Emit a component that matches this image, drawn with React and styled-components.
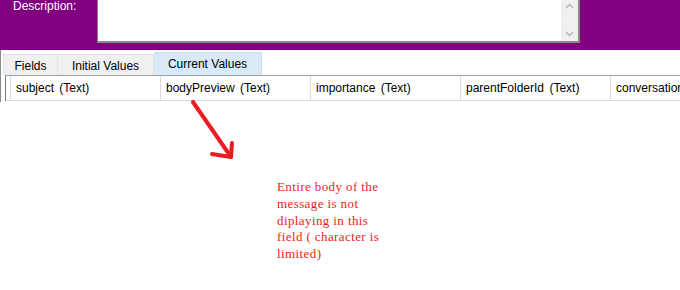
import React from "react";
import styled, { createGlobalStyle } from "styled-components";

const Global = createGlobalStyle`
  html, body { margin: 0; padding: 0; background: #ffffff; }
  body { width: 680px; height: 290px; overflow: hidden; font-family: "Liberation Sans", Arial, sans-serif; }
`;

const Page = styled.div`
  position: relative;
  width: 680px;
  height: 290px;
  background: #ffffff;
  overflow: hidden;
`;

const Header = styled.div`
  height: 50px;
  background: #800080;
  display: flex;
  align-items: flex-start;
  padding-left: 13px;
  box-sizing: border-box;
`;

const Label = styled.div`
  color: #ffffff;
  font-size: 12px;
  width: 84px;
  margin-top: -2px;
  line-height: 16px;
`;

const TextBox = styled.div`
  width: 483px;
  height: 43px;
  background: #ffffff;
  border-left: 1px solid #8a8a8a;
  border-right: 2px solid #8a8a8a;
  border-bottom: 2px solid #8a8a8a;
  box-sizing: border-box;
  display: flex;
  justify-content: flex-end;
`;

const ScrollBar = styled.div`
  width: 17px;
  background: #f0f0f0;
  display: flex;
  flex-direction: column;
  justify-content: space-between;
  align-items: center;
  padding: 3px 0 4px;
  box-sizing: border-box;
`;

const Panel = styled.div`
  border-left: 1px solid #8c8c8c;
  height: 52px;
  box-sizing: border-box;
  padding-top: 2px;
`;

const Tabs = styled.div`
  display: flex;
  align-items: flex-end;
  height: 23px;
  padding-left: 2px;
`;

const Tab = styled.div`
  height: ${(p) => (p.$active ? "23px" : "21px")};
  width: ${(p) => p.$w}px;
  box-sizing: border-box;
  background: ${(p) => (p.$active ? "#d9e9f8" : "#f0f0f0")};
  border: 1px solid ${(p) => (p.$active ? "#c6dcf0" : "#e3e3e3")};
  border-bottom: none;
  border-left: ${(p) => (p.$first ? "1px solid #e3e3e3" : "none")};
  font-size: 12px;
  color: #000;
  display: flex;
  align-items: center;
  justify-content: center;
  padding-top: ${(p) => (p.$active ? "0" : "2px")};
`;

const Grid = styled.div`
  margin-left: 4px;
  border-top: 1px solid #a0a0a0;
  border-left: 1px solid #7a7a7a;
  display: flex;
  height: 26px;
  box-sizing: border-box;
  overflow: hidden;
`;

const RowHeader = styled.div`
  flex: 0 0 4px;
  border-right: 1px solid #dadada;
  border-bottom: 1px solid #dadada;
`;

const Cell = styled.div`
  flex: 0 0 150px;
  box-sizing: border-box;
  border-right: 1px solid #dadada;
  border-bottom: 1px solid #dadada;
  font-size: 12px;
  color: #000;
  padding-left: 5px;
  display: flex;
  align-items: center;
  white-space: nowrap;
  overflow: hidden;
  word-spacing: 2px;
`;

const Arrow = styled.svg`
  position: absolute;
  left: 185px;
  top: 95px;
`;

const Note = styled.div`
  position: absolute;
  left: 277px;
  top: 179px;
  width: 108px;
  color: #ed1c24;
  font-family: "Liberation Serif", "Times New Roman", serif;
  font-size: 13px;
  letter-spacing: 0.4px;
  line-height: 16.8px;
`;

const Chevron = ({ up }) => (
  <svg width="9" height="6" viewBox="0 0 9 6">
    <path
      d={up ? "M1 5 L4.5 1.5 L8 5" : "M1 1 L4.5 4.5 L8 1"}
      fill="none"
      stroke="#b4b4b4"
      strokeWidth="1.4"
    />
  </svg>
);

const columns = [
  "subject  (Text)",
  "bodyPreview  (Text)",
  "importance  (Text)",
  "parentFolderId  (Text)",
  "conversationId  (Text)",
];

export default function App() {
  return (
    <Page>
      <Global />
      <Header>
        <Label>Description:</Label>
        <TextBox>
          <ScrollBar>
            <Chevron up />
            <Chevron />
          </ScrollBar>
        </TextBox>
      </Header>
      <Panel>
        <Tabs>
          <Tab $w={55} $first>Fields</Tab>
          <Tab $w={96}>Initial Values</Tab>
          <Tab $w={108} $active>Current Values</Tab>
        </Tabs>
        <Grid>
          <RowHeader />
          {columns.map((c) => (
            <Cell key={c}>{c}</Cell>
          ))}
        </Grid>
      </Panel>
      <Arrow width="60" height="70" viewBox="0 0 60 70">
        <path
          d="M8 7 L46 62"
          stroke="#ed1c24"
          strokeWidth="4"
          strokeLinecap="round"
          fill="none"
        />
        <path
          d="M27 59 L46 62 L47 48"
          stroke="#ed1c24"
          strokeWidth="4"
          strokeLinecap="round"
          strokeLinejoin="round"
          fill="none"
        />
      </Arrow>
      <Note>
        Entire body of the message is not diplaying in this field ( character is limited)
      </Note>
    </Page>
  );
}
